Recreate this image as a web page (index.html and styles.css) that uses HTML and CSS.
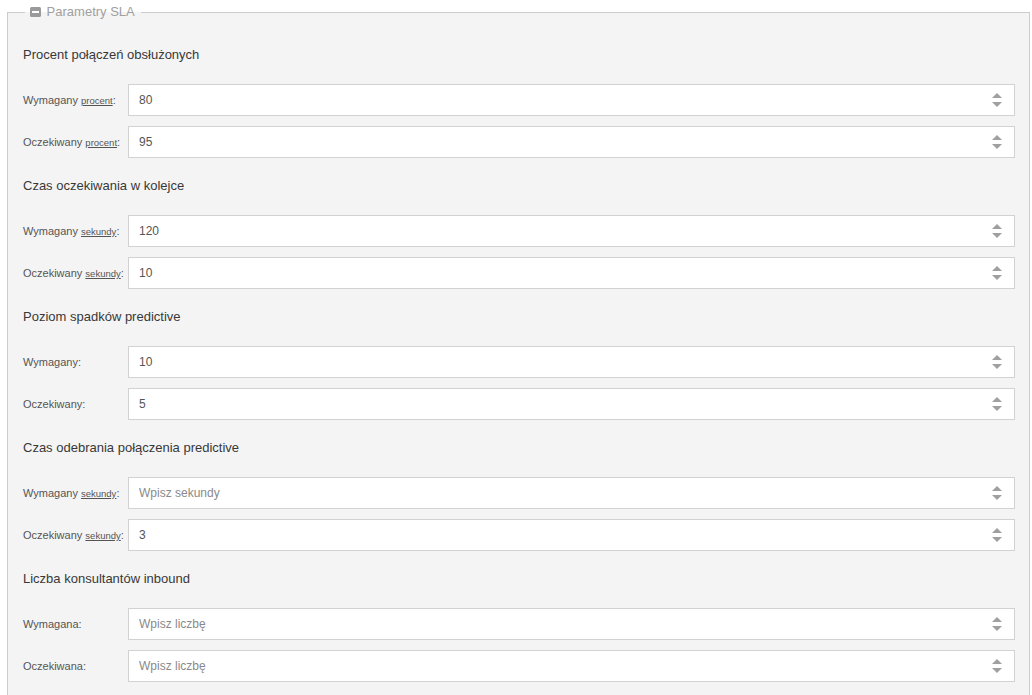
FILE: index.html
```html
<!DOCTYPE html>
<html lang="pl">
<head>
    <meta charset="UTF-8">
    <meta name="viewport" content="width=device-width, initial-scale=1.0">
    <title>Parametry SLA</title>
    <link rel="stylesheet" href="styles.css">
</head>
<body>
    <fieldset class="panel">
        <legend>
            <svg class="toggle" width="11" height="10" viewBox="0 0 11 10">
                <rect x="0" y="0" width="11" height="10" rx="1.5" fill="#9a9a9a"/>
                <rect x="2" y="4" width="7" height="2" fill="#ffffff"/>
            </svg>
            Parametry SLA
        </legend>

        <div class="section">
            <h3>Procent połączeń obsłużonych</h3>
            <div class="row">
                <label>Wymagany <abbr>procent</abbr>:</label>
                <div class="field"><input type="text" value="80"><span class="spin"></span></div>
            </div>
            <div class="row">
                <label>Oczekiwany <abbr>procent</abbr>:</label>
                <div class="field"><input type="text" value="95"><span class="spin"></span></div>
            </div>
        </div>

        <div class="section">
            <h3>Czas oczekiwania w kolejce</h3>
            <div class="row">
                <label>Wymagany <abbr>sekundy</abbr>:</label>
                <div class="field"><input type="text" value="120"><span class="spin"></span></div>
            </div>
            <div class="row">
                <label>Oczekiwany <abbr>sekundy</abbr>:</label>
                <div class="field"><input type="text" value="10"><span class="spin"></span></div>
            </div>
        </div>

        <div class="section">
            <h3>Poziom spadków predictive</h3>
            <div class="row">
                <label>Wymagany:</label>
                <div class="field"><input type="text" value="10"><span class="spin"></span></div>
            </div>
            <div class="row">
                <label>Oczekiwany:</label>
                <div class="field"><input type="text" value="5"><span class="spin"></span></div>
            </div>
        </div>

        <div class="section">
            <h3>Czas odebrania połączenia predictive</h3>
            <div class="row">
                <label>Wymagany <abbr>sekundy</abbr>:</label>
                <div class="field"><input type="text" placeholder="Wpisz sekundy"><span class="spin"></span></div>
            </div>
            <div class="row">
                <label>Oczekiwany <abbr>sekundy</abbr>:</label>
                <div class="field"><input type="text" value="3"><span class="spin"></span></div>
            </div>
        </div>

        <div class="section">
            <h3>Liczba konsultantów inbound</h3>
            <div class="row">
                <label>Wymagana:</label>
                <div class="field"><input type="text" placeholder="Wpisz liczbę"><span class="spin"></span></div>
            </div>
            <div class="row">
                <label>Oczekiwana:</label>
                <div class="field"><input type="text" placeholder="Wpisz liczbę"><span class="spin"></span></div>
            </div>
        </div>
    </fieldset>
</body>
</html>
```

FILE: styles.css
```css
* {
    margin: 0;
    padding: 0;
    box-sizing: border-box;
}

body {
    font-family: 'Liberation Sans', Arial, sans-serif;
    background-color: #ffffff;
    color: #333333;
}

.panel {
    margin: 4px 2px 0 7px;
    border: 1px solid #cccccc;
    background-color: #f4f4f4;
    padding: 0 14px 0 15px;
    min-height: 720px;
}

.panel legend {
    margin-left: 2px;
    padding: 0 6px 0 5px;
    height: 16px;
    line-height: 16px;
    font-size: 13px;
    color: #a0a0a0;
}

.toggle {
    vertical-align: -1px;
    margin-right: 2px;
}

.section {
    margin-bottom: 18px;
}

.section:first-of-type {
    margin-top: 25px;
}

.section h3 {
    font-size: 13px;
    font-weight: normal;
    line-height: 20px;
    color: #383838;
    margin-bottom: 19px;
}

.row {
    display: flex;
    align-items: center;
    margin-bottom: 10px;
}

.row:last-child {
    margin-bottom: 0;
}

.row label {
    width: 105px;
    flex-shrink: 0;
    font-size: 11px;
    color: #555555;
}

.row abbr {
    font-size: 9.5px;
    text-decoration: underline;
    color: #555555;
}

.field {
    flex: 1;
    display: flex;
    align-items: center;
    height: 32px;
    background-color: #ffffff;
    border: 1px solid #d2d2d2;
}

.field input {
    flex: 1;
    height: 100%;
    border: none;
    outline: none;
    background: transparent;
    padding-left: 10px;
    font-family: 'Liberation Sans', Arial, sans-serif;
    font-size: 12px;
    color: #555555;
}

.field input::placeholder {
    color: #8a8a8a;
}

.spin {
    position: relative;
    width: 10px;
    height: 14px;
    margin-right: 12px;
}

.spin::before,
.spin::after {
    content: "";
    position: absolute;
    left: 0;
    border-left: 5px solid transparent;
    border-right: 5px solid transparent;
}

.spin::before {
    top: 0;
    border-bottom: 5px solid #a0a0a0;
}

.spin::after {
    bottom: 0;
    border-top: 5px solid #a0a0a0;
}
```
